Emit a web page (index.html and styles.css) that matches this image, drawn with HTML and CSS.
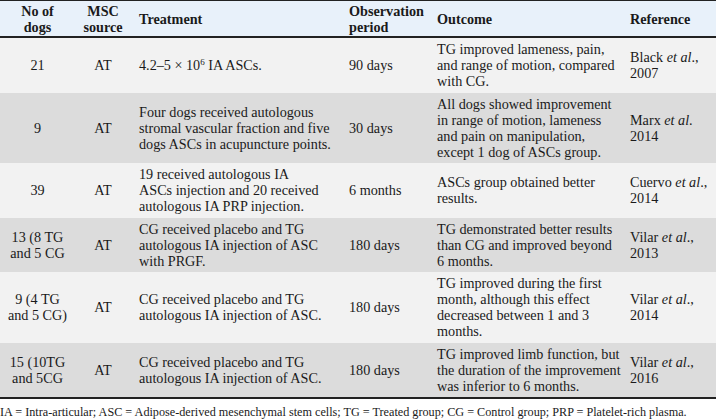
FILE: index.html
```html
<!DOCTYPE html>
<html>
<head>
<meta charset="utf-8">
<link rel="stylesheet" href="styles.css">
</head>
<body>
<table class="tbl">
  <colgroup>
    <col class="c1"><col class="c2"><col class="c3"><col class="c4"><col class="c5"><col class="c6">
  </colgroup>
  <thead>
    <tr>
      <th class="ctr">No of<br>dogs</th>
      <th class="ctr">MSC<br>source</th>
      <th>Treatment</th>
      <th>Observation<br>period</th>
      <th>Outcome</th>
      <th>Reference</th>
    </tr>
  </thead>
  <tbody>
    <tr class="lt">
      <td class="ctr">21</td>
      <td class="ctr">AT</td>
      <td>4.2–5 × 10<sup>6</sup> IA ASCs.</td>
      <td>90 days</td>
      <td>TG improved lameness, pain,<br>and range of motion, compared<br>with CG.</td>
      <td>Black <i>et al</i>.,<br>2007</td>
    </tr>
    <tr class="dk">
      <td class="ctr">9</td>
      <td class="ctr">AT</td>
      <td>Four dogs received autologous<br>stromal vascular fraction and five<br>dogs ASCs in acupuncture points.</td>
      <td>30 days</td>
      <td>All dogs showed improvement<br>in range of motion, lameness<br>and pain on manipulation,<br>except 1 dog of ASCs group.</td>
      <td>Marx <i>et al</i>.<br>2014</td>
    </tr>
    <tr class="lt">
      <td class="ctr">39</td>
      <td class="ctr">AT</td>
      <td>19 received autologous IA<br>ASCs injection and 20 received<br>autologous IA PRP injection.</td>
      <td>6 months</td>
      <td>ASCs group obtained better<br>results.</td>
      <td>Cuervo <i>et al</i>.,<br>2014</td>
    </tr>
    <tr class="dk">
      <td class="ctr">13 (8 TG<br>and 5 CG</td>
      <td class="ctr">AT</td>
      <td>CG received placebo and TG<br>autologous IA injection of ASC<br>with PRGF.</td>
      <td>180 days</td>
      <td>TG demonstrated better results<br>than CG and improved beyond<br>6 months.</td>
      <td>Vilar <i>et al</i>.,<br>2013</td>
    </tr>
    <tr class="lt">
      <td class="ctr">9 (4 TG<br>and 5 CG)</td>
      <td class="ctr">AT</td>
      <td>CG received placebo and TG<br>autologous IA injection of ASC.</td>
      <td>180 days</td>
      <td>TG improved during the first<br>month, although this effect<br>decreased between 1 and 3<br>months.</td>
      <td>Vilar <i>et al</i>.,<br>2014</td>
    </tr>
    <tr class="dk">
      <td class="ctr">15 (10TG<br>and 5CG</td>
      <td class="ctr">AT</td>
      <td>CG received placebo and TG<br>autologous IA injection of ASC.</td>
      <td>180 days</td>
      <td>TG improved limb function, but<br>the duration of the improvement<br>was inferior to 6 months.</td>
      <td>Vilar <i>et al</i>.,<br>2016</td>
    </tr>
  </tbody>
</table>
<p class="note">IA = Intra-articular; ASC = Adipose-derived mesenchymal stem cells; TG = Treated group; CG = Control group; PRP = Platelet-rich plasma.</p>
</body>
</html>
```
FILE: styles.css
```css
html, body {
  margin: 0;
  padding: 0;
  background: #ffffff;
}
body {
  font-family: "Liberation Serif", "Times New Roman", serif;
  color: #1a1a1a;
  width: 716px;
}
.tbl {
  width: 716px;
  border-collapse: collapse;
  table-layout: fixed;
  font-size: 14.2px;
  line-height: 16px;
}
.c1 { width: 75px; }
.c2 { width: 56px; }
.c3 { width: 210px; }
.c4 { width: 88px; }
.c5 { width: 193px; }
.c6 { width: 94px; }
thead tr {
  background: #e8f1fa;
  border-top: 1px solid #222;
  border-bottom: 2px solid #222;
}
th {
  font-weight: bold;
  text-align: left;
  vertical-align: middle;
  padding: 2px 4px 1px 8px;
  white-space: nowrap;
}
td {
  text-align: left;
  vertical-align: middle;
  padding: 3px 4px 3.5px 8px;
  white-space: nowrap;
}
.ctr {
  text-align: center;
  padding-left: 2px;
  padding-right: 2px;
}
.lt { background: #f2f2f2; }
.dk { background: #dcdcdc; }
tbody tr:last-child { border-bottom: 2px solid #222; }
sup {
  font-size: 9px;
  line-height: 0;
  vertical-align: 5px;
}
.note {
  margin: 5px 0 0 0;
  font-size: 12.2px;
  line-height: 16px;
  white-space: nowrap;
}
```
